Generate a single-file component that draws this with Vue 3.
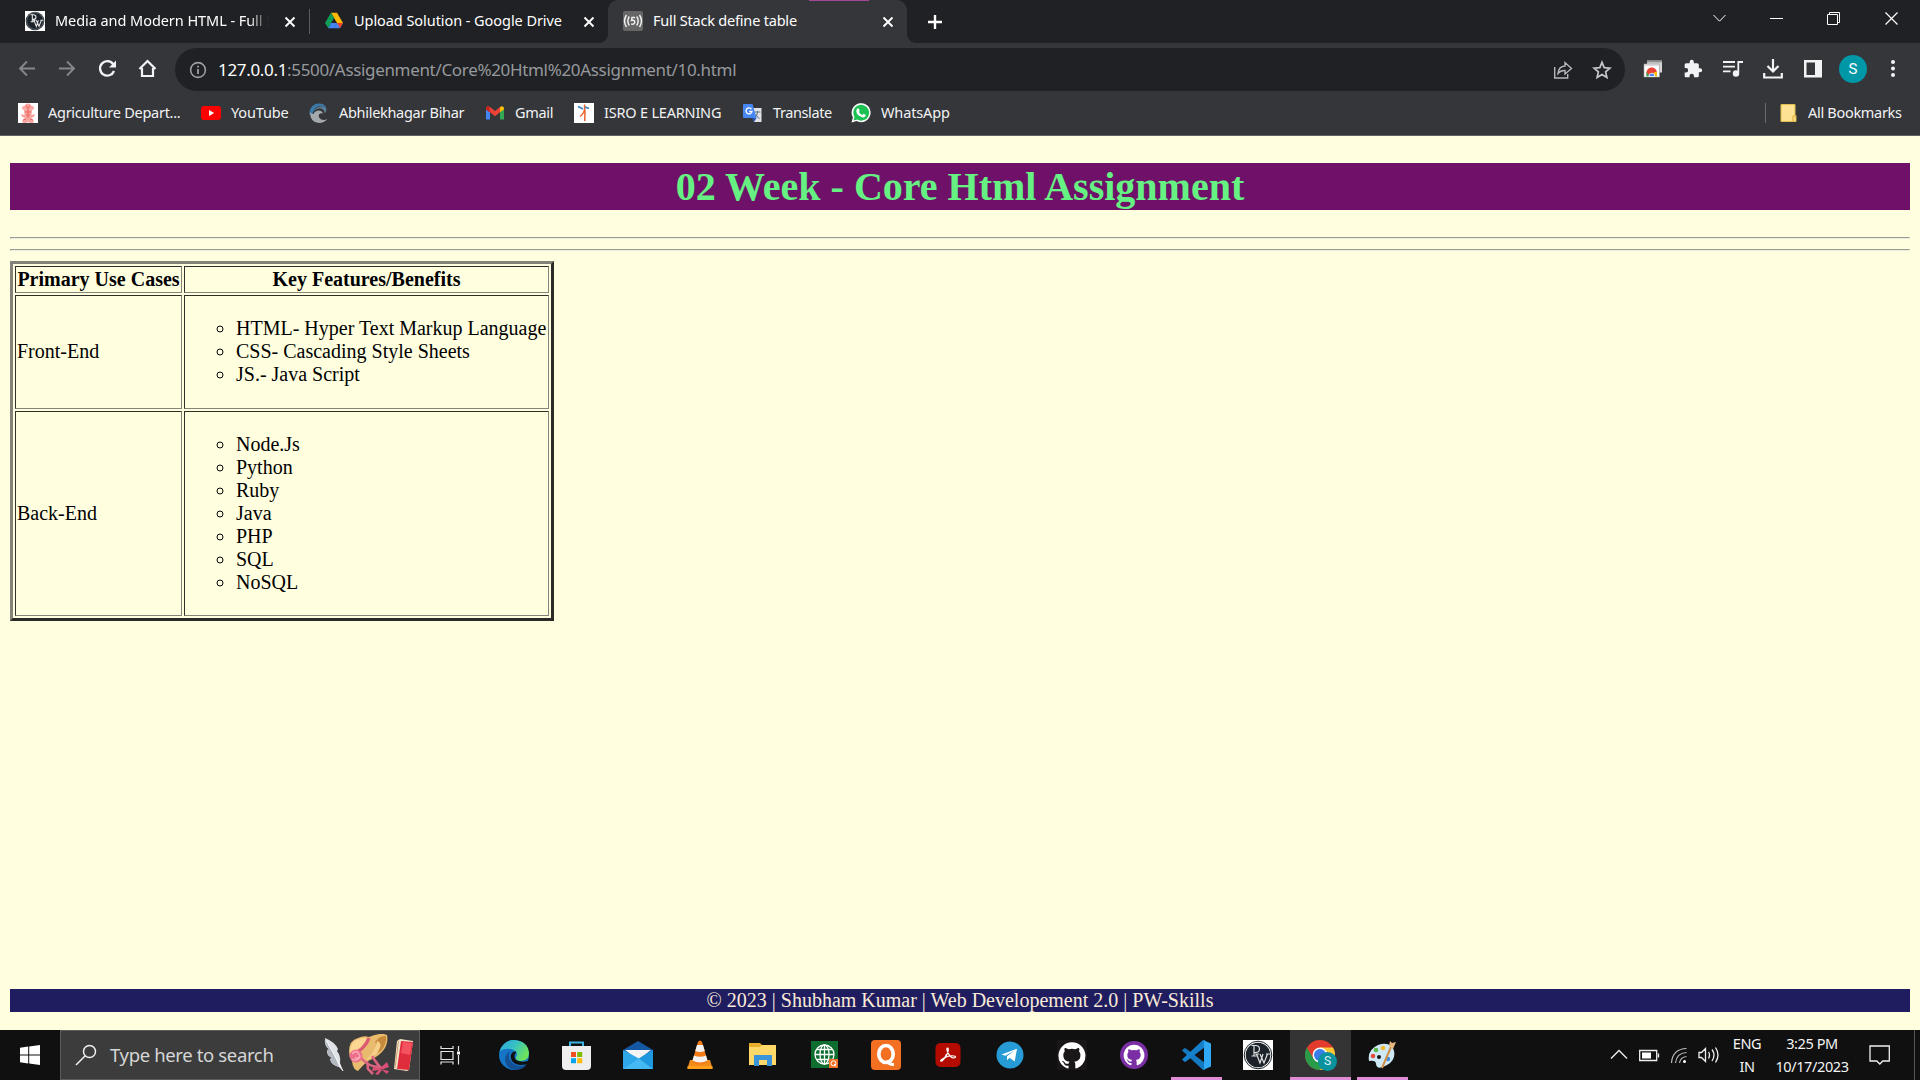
<script setup>
const bookmarks = [
  { id: 'agri', label: 'Agriculture Depart...', width: 183, ls: -0.27 },
  { id: 'youtube', label: 'YouTube', width: 108, ls: -0.15 },
  { id: 'abhi', label: 'Abhilekhagar Bihar', width: 176, ls: -0.3 },
  { id: 'gmail', label: 'Gmail', width: 89, ls: -0.3 },
  { id: 'isro', label: 'ISRO E LEARNING', width: 169, ls: -0.2 },
  { id: 'translate', label: 'Translate', width: 108, ls: -0.4 },
  { id: 'whatsapp', label: 'WhatsApp', width: 120, ls: -0.15 },
]
const rows = [
  { name: 'Front-End', cls: 'front', items: ['HTML- Hyper Text Markup Language', 'CSS- Cascading Style Sheets', 'JS.- Java Script'] },
  { name: 'Back-End', cls: 'back', items: ['Node.Js', 'Python', 'Ruby', 'Java', 'PHP', 'SQL', 'NoSQL'] },
]
</script>

<template>
  <div class="screen">
    <header class="tabstrip">
      <div class="tab t1">
        <svg class="fav" viewBox="0 0 30 30"><rect width="30" height="30" fill="#fff"/><circle cx="15" cy="15" r="14" fill="#1b2229"/><circle cx="15" cy="15" r="12.600" fill="none" stroke="#9fa5aa" stroke-width=".8"/><g fill="none" stroke="#e8e8e8" stroke-width="1.600"><path d="M8.500 5.500h4q4 0 4 3.500t-4 3.500h-2M11 5.500v10.500M8.500 16h5M12 14h4M13.500 14l3.500 9 3-9M17 14l4 9 3.500-9M23 14h4"/></g></svg>
        <span class="label l1">Media and Modern HTML - Full <i class="cut">S</i></span>
        <svg class="x" viewBox="0 0 12 12"><path d="M1.500 1.500l9 9M10.500 1.500l-9 9"/></svg>
      </div>
      <span class="divider"></span>
      <div class="tab t2">
        <svg class="fav" viewBox="0 0 20 20"><path d="M7 1.800h6L19 12h-6z" fill="#ffba00"/><path d="M7 1.800L10 7 4.300 17.200 1 12z" fill="#0f9d58"/><path d="M4.200 17.300L7.200 12H13l-2.800 5.300z" fill="#4285f4"/><path d="M10 17.300L13 12h6l-3.200 5.300z" fill="#4285f4"/><path d="M13 12h6l-3 5.200z" fill="#ea4335"/></svg>
        <span class="label">Upload Solution - Google Drive</span>
        <svg class="x" viewBox="0 0 12 12"><path d="M1.500 1.500l9 9M10.500 1.500l-9 9"/></svg>
      </div>
      <div class="tab t3">
        <svg class="fav" viewBox="0 0 20 20"><rect width="20" height="20" rx="2" fill="#666"/><g fill="none" stroke="#eee" stroke-width="1.500"><path d="M3.500 4q-4 6 0 12M6.300 5.500q-3 4.500 0 9M16.500 4q4 6 0 12M13.700 5.500q3 4.500 0 9M12 6.500H9l-.5 3q3-.8 3.300 1.500-.2 2.700-3.600 2"/></g></svg>
        <span class="label">Full Stack define table</span>
        <svg class="x" viewBox="0 0 12 12"><path d="M1.500 1.500l9 9M10.500 1.500l-9 9"/></svg>
        <i class="marker"></i>
      </div>
      <svg class="plus" viewBox="0 0 16 16"><path d="M8 1v14M1 8h14" stroke="#fff" stroke-width="2.400"/></svg>
      <svg class="winctl" viewBox="0 0 190 20" fill="none" stroke="#fff" stroke-width="1"><path d="M3.500 6l6 6.200 6-6.200M60 9.500h13"/><path d="M117.500 5.500h10v10h-10zM119.500 5.500v-2h10v10h-2"/><path d="M175.500 3.500l12 12M187.500 3.500l-12 12" stroke-width="1.200"/></svg>
    </header>

    <nav class="toolbar">
      <svg class="navic" viewBox="0 0 140 20" fill="none">
        <g stroke="#85878a" stroke-width="1.900"><path d="M17 10.500H2M9 3.500l-7 7 7 7"/><path d="M41 10.500h15M49 3.500l7 7-7 7"/></g>
        <path d="M96 13a7.200 7.200 0 1 1-.8-6.700" stroke="#f1f3f4" stroke-width="2.300"/><path d="M98 2.500v7h-7z" fill="#f1f3f4"/>
        <path d="M124 10v8h11v-8M121.500 11l8-8 8 8" stroke="#f1f3f4" stroke-width="2.200"/>
      </svg>
      <div class="omnibox">
        <svg class="info" viewBox="0 0 18 18"><circle cx="9" cy="9" r="7.400" fill="none" stroke="#9aa0a6" stroke-width="1.600"/><path d="M9 8v5M9 4.700v1.900" stroke="#9aa0a6" stroke-width="1.800"/></svg>
        <span class="url"><b>127.0.0.1</b>:5500/Assigenment/Core%20Html%20Assignment/10.html</span>
        <svg class="share" viewBox="0 0 20 20" fill="none" stroke="#b3b6ba" stroke-width="1.400"><path d="M1.700 7v11h13v-4"/><path d="M5 13.500Q5.500 6.500 12 6V2.500l6.500 6L12 14v-3.500q-4.500-.3-7 3z"/></svg>
        <svg class="star" viewBox="0 0 20 20"><path d="M10 2.300l2.200 5.300 5.800.5-4.400 3.800 1.300 5.600-4.900-3-4.900 3 1.300-5.600L2 8.100l5.800-.5z" fill="none" stroke="#c4c7ca" stroke-width="1.700"/></svg>
      </div>
      <div class="ext">
        <svg viewBox="0 0 20 20"><rect x="4" y="1.500" width="15" height="12" fill="#d5d5d5"/><path d="M4 2.700h15" stroke="#888" stroke-width="1.200"/><rect x="1" y="5" width="15.500" height="13" fill="#fff" stroke="#999" stroke-width=".6"/><path d="M1.500 6h14.500" stroke="#bbb"/><path d="M3.500 16.500v-3a5.200 5 0 0 1 10.400 0v3z" fill="#ea4335"/><path d="M3.500 12.500l3 5h-3z" fill="#34a853"/><path d="M11 13h3v4.500h-3z" fill="#fbbc05"/><path d="M5.800 17.500a3 3.300 0 0 1 6 0z" fill="#4285f4" stroke="#fff" stroke-width=".8"/></svg>
        <svg viewBox="0 0 24 24" fill="#f1f3f4"><path d="M20.500 11H19V7c0-1.100-.9-2-2-2h-4V3.500a2.500 2.500 0 0 0-5 0V5H4c-1.100 0-2 .9-2 2v3.800h1.500a2.700 2.700 0 0 1 0 5.400H2V20c0 1.100.9 2 2 2h3.800v-1.500a2.700 2.700 0 0 1 5.400 0V22H17c1.100 0 2-.9 2-2v-4h1.500a2.500 2.500 0 0 0 0-5z"/></svg>
        <svg viewBox="0 0 20 20" fill="none" stroke="#f1f3f4" stroke-width="1.800"><path d="M0 3h12M0 7.700h12M0 12.400h7.500M15.300 14V3H20"/><circle cx="13" cy="14.500" r="2.300" fill="#f1f3f4"/></svg>
        <svg viewBox="0 0 20 20" fill="none" stroke="#f1f3f4" stroke-width="2.200"><path d="M10 0v12M4.500 7l5.500 5.500L15.500 7M1.200 14v4.500h17.600V14"/></svg>
        <svg viewBox="0 0 20 20"><path d="M1 1h18v17.500H1z" fill="#f1f3f4"/><path d="M3.500 3.500H12V16H3.500z" fill="#35363a"/></svg>
        <span class="avatar">S</span>
        <svg class="kebab" viewBox="0 0 20 20" fill="#f1f3f4"><circle cx="10" cy="3" r="2"/><circle cx="10" cy="9.500" r="2"/><circle cx="10" cy="16" r="2"/></svg>
      </div>
    </nav>

    <nav class="bookmarks">
      <div v-for="b in bookmarks" :key="b.id" class="bm" :style="{ width: b.width + 'px' }">
        <svg viewBox="0 0 20 20">
          <template v-if="b.id === 'agri'"><rect width="20" height="20" fill="#fff"/><g fill="#f9a5a1"><circle cx="10" cy="4" r="3.500"/><circle cx="6" cy="5" r="2"/><circle cx="14" cy="5" r="2"/><path d="M6 7h8l-.5 5 3.500-1-1 3-3 1 3 3-1 2h-3l-2-1-2 1H5l-1-2 3-3-3-1-1-3 3.500 1z"/></g><path d="M8 2.500l2 3 2-3M7 9h6M8 12h4M10 6v9M5 17l3-1M15 17l-3-1" stroke="#ee6661" fill="none"/></template>
          <template v-else-if="b.id === 'youtube'"><rect y="3" width="20" height="14" rx="3" fill="#f00"/><path d="M8 7l5.200 3L8 13z" fill="#fff"/></template>
          <template v-else-if="b.id === 'abhi'"><path d="M.5 12A9 10 0 0 1 10 .5q6 0 7.500 5-3-3-7-2.500-5 1-5.500 5-1 3-4.500 4z" fill="#3a79a8"/><path d="M1 9q0 10.500 9 11 5 0 8.500-4-4 2-7 0-2.500-2-1.500-4.500 1.500-2 4-1-1-3-4.500-3-4 .5-5 3.500Q2 11 1 9z" fill="#a4a9ad"/><path d="M17.300 5.500q-2-2.500-6-2-5 .5-6 4.500 3-3.500 7-2.500 3 1 3.500 5 2-2 1.500-5z" fill="#5d7f96"/></template>
          <template v-else-if="b.id === 'gmail'"><path d="M1 6v10.500h4V9.300z" fill="#4285f4"/><path d="M15 9.300v7.200h4V6z" fill="#34a853"/><path d="M1 6.500V5q1-3 4-1l5 4 5-4v5.300l-5 3.900-5-3.900z" fill="#ea4335"/><path d="M15 9.300V4q3-2 4 1v1.500z" fill="#fbbc04"/><path d="M1 6.500V5q1-2 3-1.500L5 9.500z" fill="#c5221f"/></template>
          <template v-else-if="b.id === 'isro'"><rect width="20" height="20" fill="#fff"/><path d="M10.500 1.500q.8 8 .2 16.500M10.700 5.500q-.5 5-4.700 8" stroke="#e8622c" stroke-width="1.500" fill="none"/><path d="M4 3.500l5 2.500M11 4l4 1.500" stroke="#3580c4" stroke-width="1.500"/></template>
          <template v-else-if="b.id === 'translate'"><path d="M8 5h10.500V19H11z" fill="#dfe2e6"/><path d="M11.500 9h6M14.500 8v1q0 4-3 6M12.500 11q1 3 4 4.500" stroke="#62717e" fill="none"/><path d="M1 1h8.500l4 14H1q-1 0-1-1V2q0-1 1-1z" fill="#4687f4"/><path d="M13.500 15H9l2 4z" fill="#2853ad"/><path d="M8.500 6.200A3 3 0 1 0 9 8.500H6.200" stroke="#fff" stroke-width="1.300" fill="none"/></template>
          <template v-else><path d="M.5 19.500l1.400-5A9.500 9.500 0 1 1 5.500 18z" fill="#fff"/><path d="M2.500 17.500l1-3.600a7.900 7.900 0 1 1 2.800 2.700z" fill="#1bc152"/><path d="M6.200 5.700q1-1 1.700 0l.8 2-.8 1.200q1 2 3.400 3.100l1.200-1.200 2.200 1q0 2.700-2.900 2.700Q5.400 12.500 5.300 8q0-1.300.9-2.300z" fill="#fff"/></template>
        </svg>
        <span :style="{ letterSpacing: b.ls + 'px' }">{{ b.label }}</span>
      </div>
      <div class="allbm">
        <svg viewBox="0 0 18 20"><path d="M1 1.500h14v11h1v6H1z" fill="#fde293" stroke="#e3bd4b"/><path d="M13 18v-5h3" fill="none" stroke="#e3a92b"/></svg>
        <span>All Bookmarks</span>
      </div>
    </nav>

    <main class="page">
      <h1>02 Week - Core Html Assignment</h1>
      <hr><hr>
      <table>
        <tbody>
          <tr class="head"><th>Primary Use Cases</th><th>Key Features/Benefits</th></tr>
          <tr v-for="r in rows" :key="r.name" :class="r.cls">
            <td>{{ r.name }}</td>
            <td><ul><li v-for="i in r.items" :key="i">{{ i }}</li></ul></td>
          </tr>
        </tbody>
      </table>
      <footer>© 2023 | Shubham Kumar | Web Developement 2.0 | PW-Skills</footer>
    </main>

    <div class="taskbar">
      <div class="start"><svg width="20" height="20" viewBox="0 0 20 20" fill="#fff"><path d="M0 2.800L8.200 1.600v7.900H0zM9.200 1.500L20 0v9.500H9.200zM0 10.500h8.200v7.900L0 17.200zM9.200 10.500H20V20L9.200 18.500z"/></svg></div>
      <div class="search">
        <svg width="22" height="22" viewBox="0 0 22 22" fill="none" stroke="#f0f0f0" stroke-width="1.500"><circle cx="14.500" cy="7.500" r="6"/><path d="M10.200 11.800L1 21"/></svg>
        <span>Type here to search</span>
        <svg class="art" width="92" height="42" viewBox="0 0 92 42">
          <path d="M3 4q10 4 13 11l-1 2q4 5 3 12l3 8-4-4q-8-2-9-8l2-1q-6-3-5-8l2-.5Q2 12 3 4z" fill="#dfe2e6"/><path d="M3 4q0 7 4 11.500L5 16q0 5 5 8l-2 1q1 6 9 8Q12 18 3 4z" fill="#b4b9c1"/><path d="M4 6q8 14 17 31" stroke="#fafafa" fill="none"/>
          <path d="M27 18Q27 6 36 4q6-3 11-1Q59-2 65 1q2 9-5 17-6 6-14 9-5 4-10 10-5-1-6-10-3-4-3-9z" fill="#e9bb6f"/><path d="M28 16q1-9 9-11 6-2 9 0-4 10-14 15-4-1-4-4z" fill="#fbd793"/><path d="M53 8Q58 1 64 2q1 8-5 15-3 2-6 2 5-6 0-11z" fill="#c58a3b"/><path d="M55 7q7 2 0 12-4 5-11 7 10-9 11-19z" fill="#f6cf88"/><path d="M30 21q13-6 17-17" stroke="#dc5b73" stroke-width="3.500" fill="none"/>
          <path d="M39 24q8 9 18 9M45 27l1 8 5 5M50 22q5 8 9 12" stroke="#dd6583" stroke-width="2.500" fill="none"/><path d="M58 34l7-6 2 5-8 3zM58 34l-7-1-1 4 8-1zM58 35l-5 5 3 1 4-5 5 4 2-3z" fill="#d94f76"/>
          <circle cx="34" cy="22" r="6.500" fill="#ed6f89"/><path d="M30 20q4-5 7 0t-4 4M30 25q5 3 8-2" stroke="#fbb2c0" stroke-width="1.300" fill="none"/>
          <path d="M75 7l3-2 13 2-4 29-2 1-13-2z" fill="#f2e5cb"/><path d="M79 7l12 1-4 28-12-1z" fill="#e02d3c"/><path d="M81 8l9 1-2 12-9-2z" fill="#f4525f"/><path d="M76.500 7l-3.500 27" stroke="#c98e55" stroke-width=".8"/>
        </svg>
      </div>
      <div class="taskview"><svg width="22" height="20" viewBox="0 0 22 20" fill="none" stroke="#e6e6e6" stroke-width="1.200"><path d="M1 1v2.500h12V1M1 6.500h12v8H1zM1 19.500V17h12v2.500M18.500 1v5M18.500 10v9.500"/><path d="M17 6.500h3v3h-3z" fill="#fff" stroke="none"/></svg></div>
      <div class="apps">
        <div><svg viewBox="0 0 30 30"><defs><linearGradient id="eg" x1="0" y1="0" x2="1" y2=".5"><stop offset="0" stop-color="#2fa6dc"/><stop offset=".5" stop-color="#35c1c6"/><stop offset="1" stop-color="#6de25c"/></linearGradient></defs><circle cx="15" cy="15" r="15" fill="#1576c8"/><path d="M.5 12Q4 0 15 0q14 1 15 13 0 8-9 8-5-.5-4-4 1-1 1-3-1-4-6-5Q4 8 .5 12z" fill="url(#eg)"/><path d="M12 10q-4 4-1 10 4 6 10 6 4 0 7-2-4 6-12 6Q6 28 6 19q1-6 6-9z" fill="#124f93"/><path d="M17.500 12q-4 4-.5 8 5 3 12 1l1-1v3l-2 1q-10 3-15-3-3-6 1-9 2-1 3.500 0z" fill="#101010"/></svg></div>
        <div><svg viewBox="0 0 30 30"><path d="M9 8V2.500h13V8" fill="none" stroke="#3bb3e4" stroke-width="2"/><path d="M1 6h29v20q0 4-4 4H5q-4 0-4-4z" fill="#eee"/><path d="M10 12h5v5h-5z" fill="#f25022"/><path d="M16.200 12h5v5h-5z" fill="#7fba00"/><path d="M10 18.200h5v5h-5z" fill="#00a4ef"/><path d="M16.200 18.200h5v5h-5z" fill="#ffb900"/></svg></div>
        <div><svg viewBox="0 0 30 30"><path d="M0 10L15 1l15 9-4 5H4z" fill="#1458a4"/><path d="M2 10h26L15 20z" fill="#f5f5f5"/><path d="M0 10l16 8.500 14-8.500v19H0z" fill="#2fa8ea"/><path d="M0 29l16-10.500L30 29z" fill="#45b9f2"/><path d="M16 18.500L30 10v19z" fill="#1f97df"/></svg></div>
        <div><svg viewBox="0 0 30 30"><path d="M5 20h20l2.500 8.500H2.500z" fill="#f38b18"/><path d="M2.500 26h25v3h-25z" fill="#ff9f1c"/><path d="M13 2q2-3 4 0l6 20q-8 5-16 0z" fill="#f47b16"/><path d="M12 5h6l1.800 6q-5 2-9.600 0zM9 15.500q6 2.500 12 0l1.500 5q-7.500 4-15 0z" fill="#f3f3f3"/></svg></div>
        <div><svg viewBox="0 0 30 30"><path d="M2 3h11l3 3h13v19H2z" fill="#e8ad2c"/><path d="M2 7h11l2-2h14v20H2z" fill="#ffd869"/><path d="M7 26V15h18v11h-5v-6h-8v6z" fill="#3b94d9"/></svg></div>
        <div><svg viewBox="0 0 30 30"><rect x="2" y="1" width="27" height="27" fill="#0d6e2f"/><g fill="none" stroke="#fff" stroke-width="1.300"><circle cx="15.500" cy="14.500" r="9.500"/><ellipse cx="15.500" cy="14.500" rx="4.500" ry="9.500"/><path d="M15.500 5v19M6 14.500h19M8 9.500h15M8 19.500h15"/></g><rect x="20" y="19" width="9" height="9" fill="#f27024"/><circle cx="24.500" cy="23.300" r="2.500" fill="none" stroke="#fff"/><path d="M25 24l2 2.500" stroke="#fff"/></svg></div>
        <div><svg viewBox="0 0 30 30"><rect width="30" height="30" rx="4" fill="#f36f21"/><ellipse cx="15" cy="14" rx="7.200" ry="8.500" fill="none" stroke="#fff" stroke-width="3.600"/><path d="M15 21q4 4 8 3.500" stroke="#fff" stroke-width="3" fill="none"/></svg></div>
        <div><svg viewBox="0 0 30 30"><rect x="2.500" y="3" width="25" height="24" rx="5" fill="#b30b00"/><path d="M8.500 20.500q4.500-2 6.500-9 .8-3.500-.5-3.500t0 3.500q2.500 6.500 6.500 6.500 2.500-.5 1-1.800-4.500-1.500-11 1.800-4.500 2.500-3 3.200 2.200 0 5.500-7" fill="none" stroke="#fff" stroke-width="1.200"/></svg></div>
        <div><svg viewBox="0 0 30 30"><circle cx="15" cy="15" r="13.500" fill="#269bd5"/><path d="M6.500 14.500L22 8.700l-2.300 12.800-5.200-3.800-2.500 2.600v-4l7-5.600-8.600 5z" fill="#fff"/></svg></div>
        <div><svg viewBox="0 0 30 30"><rect width="30" height="30" fill="#1b1718"/><g transform="translate(1.500 2) scale(1.120)" fill="#fff"><path d="M12 .3a12 12 0 0 0-3.800 23.400c.6.100.8-.3.800-.6v-2c-3.300.7-4-1.600-4-1.600-.6-1.400-1.400-1.800-1.400-1.800-1-.7.100-.7.100-.7 1.200 0 1.900 1.200 1.900 1.200 1 1.800 2.800 1.300 3.500 1 0-.8.400-1.300.7-1.600-2.700-.3-5.500-1.300-5.500-6 0-1.200.5-2.300 1.300-3.100-.2-.4-.6-1.600 0-3.200 0 0 1-.3 3.400 1.200a11.500 11.500 0 0 1 6 0c2.300-1.500 3.300-1.200 3.300-1.200.6 1.600.2 2.800 0 3.200.9.800 1.300 1.900 1.300 3.200 0 4.600-2.800 5.600-5.500 5.900.5.400.9 1 .9 2.200v3.300c0 .3.100.7.800.6A12 12 0 0 0 12 .3"/></g></svg></div>
        <div><svg viewBox="0 0 30 30"><circle cx="15" cy="15" r="14" fill="#7b2fa5"/><g transform="translate(4.600 4.600) scale(.87)" fill="#fff"><path d="M12 .3a12 12 0 0 0-3.800 23.400c.6.100.8-.3.800-.6v-2c-3.300.7-4-1.600-4-1.600-.6-1.400-1.400-1.800-1.400-1.800-1-.7.100-.7.100-.7 1.200 0 1.900 1.200 1.900 1.200 1 1.800 2.800 1.300 3.500 1 0-.8.400-1.300.7-1.600-2.700-.3-5.500-1.300-5.500-6 0-1.200.5-2.300 1.300-3.100-.2-.4-.6-1.600 0-3.200 0 0 1-.3 3.400 1.200a11.500 11.500 0 0 1 6 0c2.300-1.500 3.300-1.200 3.300-1.200.6 1.600.2 2.800 0 3.200.9.800 1.300 1.900 1.300 3.200 0 4.600-2.800 5.600-5.500 5.900.5.400.9 1 .9 2.200v3.300c0 .3.100.7.800.6A12 12 0 0 0 12 .3"/></g></svg></div>
        <div class="open"><svg viewBox="0 0 30 30"><path d="M1 10.500l2-2q1-.5 2 0L24 23v6.500L22 30z" fill="#1479be"/><path d="M1 19.500l2 2q1 .5 2 0L24 7V.5L22 0z" fill="#1580cc"/><path d="M22 0l8 3.500v23L22 30q1-.5 1-2V2q0-1.500-1-2z" fill="#31a8f3"/></svg></div>
        <div><svg viewBox="0 0 30 30"><rect width="30" height="30" fill="#fff"/><circle cx="15" cy="15" r="13.800" fill="#fff" stroke="#1b2229"/><circle cx="15" cy="15" r="12.300" fill="#1b2229"/><g fill="none" stroke="#e0e0e0" stroke-width="1.200"><path d="M8.500 5.500h4q4 0 4 3.500t-4 3.500h-2M11 5.500v10.500M8.500 16h5M12 14h4M13.500 14l3.500 9 3-9M17 14l4 9 3.500-9M23 14h4"/></g></svg></div>
        <div class="open active"><svg viewBox="0 0 30 30"><circle cx="15" cy="15" r="15" fill="#e33b2e"/><path d="M2 7.500A15 15 0 0 0 15 30l6.500-11.300-13 0z" fill="#2a9b48"/><path d="M15 7.500h13A15 15 0 0 1 15 30l6.500-11z" fill="#fcc934"/><circle cx="15" cy="15" r="7.500" fill="#fff"/><circle cx="15" cy="15" r="6" fill="#3b7de9"/></svg><i>S</i></div>
        <div class="open"><svg viewBox="0 0 30 30"><path d="M2 21Q0 10 11 5q13-4 16 6 2 9-7 14Q10 31 9 24q0-4-7-3z" fill="#cfe8f5"/><circle cx="12" cy="17" r="2" fill="#14161a"/><circle cx="6" cy="16" r="2.300" fill="#e84c3d"/><circle cx="9" cy="10" r="2.300" fill="#58b947"/><circle cx="16" cy="8" r="2.300" fill="#f4b72f"/><circle cx="21" cy="19" r="2.200" fill="#438ee0"/><path d="M24 7L15 28" stroke="#d08d45" stroke-width="2"/><path d="M22 6l1-5 2 2 4-1-3 7z" fill="#e5b67b"/></svg></div>
      </div>
      <div class="tray">
        <svg width="112" height="20" viewBox="0 0 112 20" fill="none" stroke="#f0f0f0" stroke-width="1.300"><path d="M1 13.500l8-8 8 8"/><path d="M29.700 5.500h17v10h-17zM48.500 8.500v4"/><path d="M32 7.500h9v6h-9z" fill="#fff" stroke="none"/><g stroke-width="1.200"><path d="M61.500 18q1-14 15-14.500M65.500 18q1-10 11-10.500M69.500 18q1-6 7-6.500" stroke="#bbb"/></g><circle cx="74.500" cy="16.500" r="1.500" fill="#fff" stroke="none"/><path d="M89 7.500h2.500l4-4v13l-4-4H89zM98.500 7q2 3 0 6.500M102 4.500q4 5.500 0 11.500M105.500 2.500q5 7.500 0 15"/></svg>
        <div class="lang"><span>ENG</span><span>IN</span></div>
        <div class="clock"><span>3:25 PM</span><span>10/17/2023</span></div>
        <svg width="22" height="22" viewBox="0 0 22 22" fill="none" stroke="#f0f0f0" stroke-width="1.300"><path d="M1 2h19.300v15h-6.500l-3 3-3-3H1z"/></svg>
        <i class="peek"></i>
      </div>
    </div>
  </div>
</template>

<style>
html, body { overflow: hidden; }
</style>

<style scoped>
.screen { width: 1920px; height: 1080px; display: flex; flex-direction: column; font-family: "Noto Sans", "Open Sans", sans-serif; color: #f1f3f4; overflow: hidden; }
svg { display: block; flex: none; }
i { font-style: normal; }
.tabstrip { height: 43px; background: #202124; display: flex; align-items: center; flex: none; }
.tab { display: flex; align-items: center; height: 43px; box-sizing: border-box; font-size: 14.5px; letter-spacing: -0.06px; white-space: nowrap; color: #fff; }
.label { flex: 1; line-height: 20px; margin-top: -3px; overflow: hidden; }
.fav { width: 20px; height: 20px; margin: -1px 10px 0 0; }
.x { width: 12px; height: 12px; fill: none; stroke: #fff; stroke-width: 1.9; }
.t1 { width: 309px; padding: 0 13px 0 25px; }
.l1 { margin-right: 14px; -webkit-mask-image: linear-gradient(90deg, #000 90%, transparent 100%); mask-image: linear-gradient(90deg, #000 90%, transparent 100%); }
.cut { opacity: .5; }
.divider { width: 1px; height: 25px; background: #5b5c60; }
.t2 { width: 298px; padding: 0 13px 0 14px; }
.t3 { width: 299px; padding: 0 13px 0 15px; background: #35363a; border-radius: 10px 10px 0 0; position: relative; letter-spacing: -0.2px; }
.t3::before, .t3::after { content: ""; position: absolute; bottom: 0; width: 10px; height: 10px; }
.t3::before { left: -10px; background: radial-gradient(circle at 0 0, transparent 10px, #35363a 10.5px); }
.t3::after { right: -10px; background: radial-gradient(circle at 100% 0, transparent 10px, #35363a 10.5px); }
.marker { position: absolute; left: 201px; top: 0; width: 60px; height: 1px; background: #a3479b; }
.plus { width: 16px; height: 16px; margin-left: 20px; }
.winctl { width: 190px; height: 20px; margin: -6px 20px 0 auto; }
.toolbar { height: 48px; box-sizing: border-box; padding-top: 5px; background: #35363a; display: flex; align-items: center; flex: none; }
.navic { width: 140px; height: 20px; margin: -3px 17px 0 18px; }
.omnibox { width: 1450px; height: 43px; border-radius: 22px; background: #202124; display: flex; align-items: center; flex: none; }
.info { width: 18px; height: 18px; margin: 0 11px 0 14px; }
.url { font-size: 17px; letter-spacing: -0.33px; color: #96999d; white-space: nowrap; flex: 1; line-height: 24px; }
.url b { font-weight: 400; color: #fff; }
.share { width: 20px; height: 20px; margin-right: 19px; }
.star { width: 20px; height: 20px; margin-right: 13px; }
.ext { display: flex; align-items: center; flex: 1; gap: 20px; padding-left: 18px; margin-top: -2px; }
.ext svg { width: 20px; height: 20px; }
.ext .kebab { margin-left: -1px; }
.avatar { width: 28px; height: 28px; border-radius: 50%; background: #0097a7; color: #fff; font: 15px/28px Roboto, sans-serif; text-align: center; margin: 0 -3px 0 -4px; }
.bookmarks { height: 45px; box-sizing: border-box; padding: 0 17px 0 18px; background: #35363a; border-bottom: 1px solid #5f6063; display: flex; align-items: center; font-size: 14.5px; letter-spacing: -0.3px; white-space: nowrap; flex: none; }
.bookmarks span { margin-top: -2px; }
.bm { display: flex; align-items: center; gap: 10px; flex: none; }
.bm svg { width: 20px; height: 20px; }
.allbm { margin-left: auto; width: 137px; height: 20px; border-left: 1px solid #6a6b6e; display: flex; align-items: center; }
.allbm svg { width: 18px; height: 20px; margin: 0 10px 0 14px; }

.page { height: 894px; box-sizing: border-box; padding: 27px 10px 18px; background: #ffffe0; color: #000; font: 20px/23px "Liberation Serif", serif; display: flex; flex-direction: column; flex: none; }
h1 { margin: 0 0 27px; font-size: 40px; line-height: 47px; text-align: center; background: #6f1169; color: #66f282; flex: none; }
hr { width: 100%; box-sizing: border-box; height: 2px; margin: 0 0 10px; border: 1px solid; border-color: #9a9a96 #eeeedd #eeeedd #9a9a96; }
table { width: 544px; height: 360px; table-layout: fixed; border: 3px solid; border-color: #84837a #2c2a28 #2c2a28 #84837a; border-collapse: separate; border-spacing: 2px; box-sizing: border-box; }
th, td { border: 1px solid; border-color: #302f2a #84837a #84837a #302f2a; padding: 0 1px; box-sizing: border-box; white-space: nowrap; }
th:first-child { width: 167px; }
.head { height: 27px; }
.front { height: 114px; }
.front td { padding-bottom: 1px; }
.back { height: 205px; }
ul { margin: 0; padding-left: 50px; list-style: circle; }
footer { margin-top: auto; height: 23px; background: #1f1d60; color: #faebd7; text-align: center; }

.taskbar { height: 50px; background: #101010; display: flex; flex: none; }
.start, .taskview { width: 60px; display: flex; align-items: center; justify-content: center; flex: none; }
.taskview { width: 61px; margin-right: 2px; }
.search { width: 360px; box-sizing: border-box; border: 1px solid #5c5c5c; background: #3c3c3c; display: flex; align-items: center; flex: none; padding-left: 14px; font-size: 18.5px; letter-spacing: -0.36px; color: #d6d6d6; white-space: nowrap; }
.search span { margin: -2px 0 0 13px; width: 212px; }
.apps { display: flex; flex: none; }
.apps > div { width: 62px; height: 50px; display: flex; align-items: center; justify-content: center; position: relative; }
.apps svg { width: 30px; height: 30px; }
.open::after { content: ""; position: absolute; left: 6px; right: 5px; bottom: 0; height: 3px; background: #e08bd5; }
.active { background: linear-gradient(#343434, #343434) 1px 0 / 61px 50px no-repeat; }
.active::after { left: 1px; right: 0; }
.active i { position: absolute; left: 29px; top: 22px; width: 19px; height: 19px; border-radius: 50%; background: #0a929e; color: #d9f2f4; font: 12px/19px Roboto, sans-serif; text-align: center; }
.tray { margin-left: auto; display: flex; align-items: center; font-size: 14.5px; letter-spacing: -0.4px; color: #f4f4f4; }
.lang, .clock { display: flex; flex-direction: column; align-items: center; line-height: 23px; white-space: nowrap; }
.lang { width: 40px; margin-left: 5px; }
.clock { width: 90px; margin: 0 12px 0 0; }
.peek { width: 1px; height: 50px; background: #555; margin: 0 5px 0 23px; }
</style>
